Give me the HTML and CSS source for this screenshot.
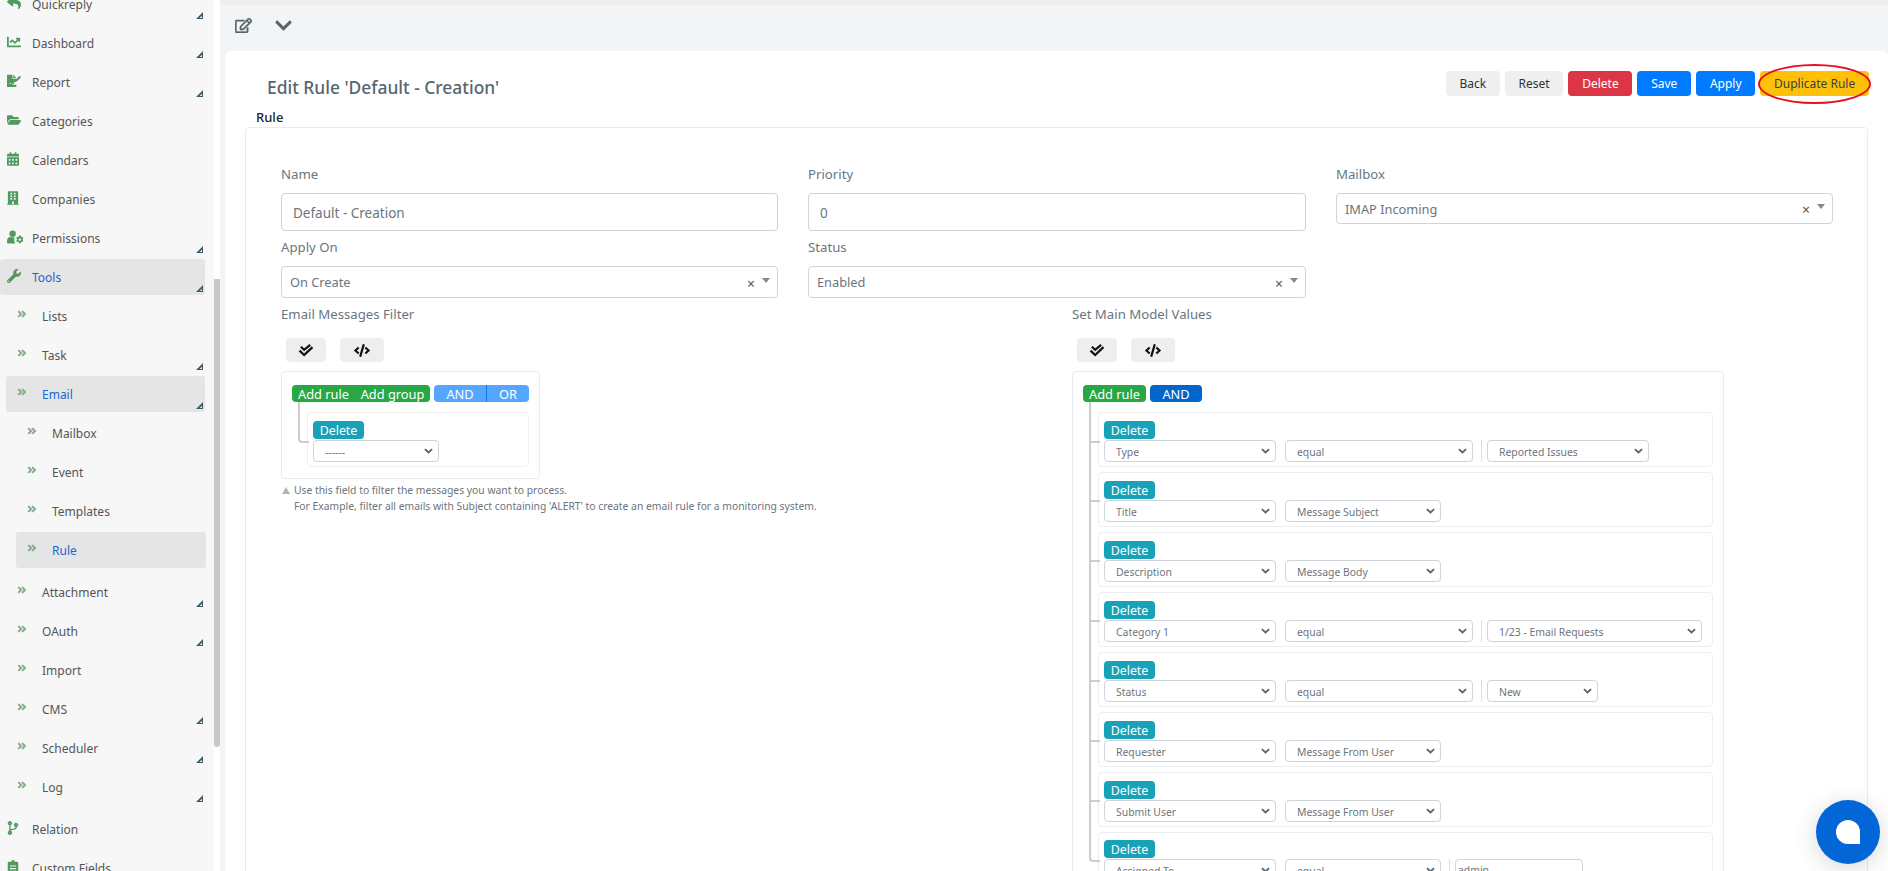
FILE: index.html
```html
<!DOCTYPE html>
<html lang="en">
<head>
<meta charset="utf-8">
<title>Edit Rule</title>
<link rel="stylesheet" href="styles.css">
</head>
<body>
<svg class="defs" aria-hidden="true">
  <symbol id="i-reply" viewBox="0 0 512 512"><path d="M8.309 189.836L184.313 37.851C199.719 24.546 224 35.347 224 56.015v80.053c160.629 1.839 288 34.032 288 186.258 0 61.441-39.581 122.309-83.333 154.132-13.653 9.931-33.111-2.533-28.077-18.631 45.344-145.012-21.507-183.51-176.59-185.742V360c0 20.7-24.3 31.453-39.687 18.164l-176.004-152c-11.071-9.562-11.086-26.753 0-36.328z"/></symbol>
  <symbol id="i-chart" viewBox="0 0 512 512"><path d="M496 384H64V80c0-8.84-7.16-16-16-16H16C7.16 64 0 71.16 0 80v336c0 17.67 14.33 32 32 32h464c8.84 0 16-7.16 16-16v-32c0-8.84-7.16-16-16-16zM464 96H345.94c-21.38 0-32.09 25.85-16.97 40.97l32.4 32.4L288 242.75l-73.37-73.37c-12.5-12.5-32.76-12.5-45.25 0l-68.69 68.69c-6.25 6.25-6.25 16.38 0 22.63l22.62 22.62c6.25 6.25 16.38 6.25 22.63 0L192 237.25l73.37 73.37c12.5 12.5 32.76 12.5 45.25 0l96-96 32.4 32.4c15.12 15.12 40.97 4.41 40.97-16.97V112c0-8.84-7.16-16-16-16z"/></symbol>
  <symbol id="i-report" viewBox="0 0 576 512"><path d="M0 24C0 11 11 0 24 0h200v136c0 13 11 24 24 24h136v60L300 304l-20 90-50-40-40 50-60-70-50 50h120c10 20 30 30 60 30l124-4v68c0 13-11 24-24 24H24c-13 0-24-11-24-24z"/><path d="M256 0l128 128H256zM560 80l-20-20c-12-12-30-12-42 0L340 220l-30 90 90-30L560 122c12-12 12-30 0-42z"/></symbol>
  <symbol id="i-folder" viewBox="0 0 576 512"><path d="M572.694 292.093L500.27 416.248A63.997 63.997 0 0 1 444.989 448H45.025c-18.523 0-30.064-20.093-20.731-36.093l72.424-124.155A64 64 0 0 1 152 256h399.964c18.523 0 30.064 20.093 20.73 36.093zM152 224h328v-48c0-26.51-21.49-48-48-48H272l-64-64H48C21.49 64 0 85.49 0 112v278.046l69.077-118.418C86.214 242.25 117.989 224 152 224z"/></symbol>
  <symbol id="i-calendar" viewBox="0 0 448 512"><path d="M0 464c0 26.5 21.5 48 48 48h352c26.5 0 48-21.5 48-48V192H0v272zm320-196c0-6.6 5.4-12 12-12h40c6.6 0 12 5.4 12 12v40c0 6.6-5.4 12-12 12h-40c-6.6 0-12-5.4-12-12v-40zm0 128c0-6.6 5.4-12 12-12h40c6.6 0 12 5.4 12 12v40c0 6.6-5.4 12-12 12h-40c-6.6 0-12-5.4-12-12v-40zM192 268c0-6.6 5.4-12 12-12h40c6.6 0 12 5.4 12 12v40c0 6.6-5.4 12-12 12h-40c-6.6 0-12-5.4-12-12v-40zm0 128c0-6.6 5.4-12 12-12h40c6.6 0 12 5.4 12 12v40c0 6.6-5.4 12-12 12h-40c-6.6 0-12-5.4-12-12v-40zM64 268c0-6.6 5.4-12 12-12h40c6.6 0 12 5.4 12 12v40c0 6.6-5.4 12-12 12H76c-6.6 0-12-5.4-12-12v-40zm0 128c0-6.6 5.4-12 12-12h40c6.6 0 12 5.4 12 12v40c0 6.6-5.4 12-12 12H76c-6.6 0-12-5.4-12-12v-40zM400 64h-48V16c0-8.8-7.2-16-16-16h-32c-8.8 0-16 7.2-16 16v48H160V16c0-8.8-7.2-16-16-16h-32c-8.8 0-16 7.2-16 16v48H48C21.5 64 0 85.5 0 112v48h448v-48c0-26.5-21.5-48-48-48z"/></symbol>
  <symbol id="i-building" viewBox="0 0 448 512"><path d="M436 480h-20V24c0-13.255-10.745-24-24-24H56C42.745 0 32 10.745 32 24v456H12c-6.627 0-12 5.373-12 12v20h448v-20c0-6.627-5.373-12-12-12zM128 76c0-6.627 5.373-12 12-12h40c6.627 0 12 5.373 12 12v40c0 6.627-5.373 12-12 12h-40c-6.627 0-12-5.373-12-12V76zm0 96c0-6.627 5.373-12 12-12h40c6.627 0 12 5.373 12 12v40c0 6.627-5.373 12-12 12h-40c-6.627 0-12-5.373-12-12v-40zm52 148h-40c-6.627 0-12-5.373-12-12v-40c0-6.627 5.373-12 12-12h40c6.627 0 12 5.373 12 12v40c0 6.627-5.373 12-12 12zm76 160h-64v-84c0-6.627 5.373-12 12-12h40c6.627 0 12 5.373 12 12v84zm64-172c0 6.627-5.373 12-12 12h-40c-6.627 0-12-5.373-12-12v-40c0-6.627 5.373-12 12-12h40c6.627 0 12 5.373 12 12v40zm0-96c0 6.627-5.373 12-12 12h-40c-6.627 0-12-5.373-12-12v-40c0-6.627 5.373-12 12-12h40c6.627 0 12 5.373 12 12v40zm0-96c0 6.627-5.373 12-12 12h-40c-6.627 0-12-5.373-12-12V76c0-6.627 5.373-12 12-12h40c6.627 0 12 5.373 12 12v40z"/></symbol>
  <symbol id="i-usercog" viewBox="0 0 640 512"><circle cx="224" cy="128" r="128"/><path d="M134 256h17c22 10 47 16 73 16s50-6 73-16h5c-14 30-18 60-14 96-10 50 10 100 50 160H48c-26 0-48-22-48-48v-42C0 311 60 256 134 256z"/><path fill-rule="evenodd" d="M476 200h80l8 46 34 18 42-16 22 62-36 30v24l36 30-22 62-42-16-34 18-8 46h-80l-8-46-34-18-42 16-22-62 36-30v-24l-36-30 22-62 42 16 34-18zM516 310a48 48 0 1 0 .1 0z"/></symbol>
  <symbol id="i-wrench" viewBox="0 0 512 512"><path d="M507.73 109.1c-2.24-9.03-13.54-12.09-20.12-5.51l-74.36 74.36-67.88-11.31-11.31-67.88 74.36-74.36c6.62-6.62 3.43-17.9-5.66-20.16-47.38-11.74-99.55.91-136.58 37.93-39.64 39.64-50.55 97.1-34.05 147.2L18.74 402.76c-24.99 24.99-24.99 65.51 0 90.5 24.99 24.99 65.51 24.99 90.5 0l213.21-213.21c50.12 16.71 107.47 5.68 147.37-34.22 37.07-37.07 49.7-89.32 37.91-136.73zM64 472c-13.25 0-24-10.75-24-24 0-13.26 10.75-24 24-24s24 10.74 24 24c0 13.25-10.75 24-24 24z"/></symbol>
  <symbol id="i-branch" viewBox="0 0 384 512"><path d="M384 144c0-44.2-35.8-80-80-80s-80 35.8-80 80c0 36.4 24.3 67.1 57.5 76.8-.6 16.1-4.2 28.5-11 36.9-15.4 19.2-49.3 22.4-85.2 25.7-28.2 2.6-57.4 5.4-81.3 16.9v-144c32.5-10.2 56-40.5 56-76.3 0-44.2-35.8-80-80-80S0 35.8 0 80c0 35.8 23.5 66.1 56 76.3v199.3C23.5 365.9 0 396.2 0 432c0 44.2 35.8 80 80 80s80-35.8 80-80c0-34-21.2-63.1-51.2-74.6 3.1-5.2 7.8-9.8 14.9-13.4 16.2-8.2 40.4-10.4 66.1-12.8 42.2-3.9 90-8.4 118.2-43.4 14-17.4 21.1-39.8 21.6-67.9 31.6-10.8 54.4-40.7 54.4-75.9zM80 64c8.8 0 16 7.2 16 16s-7.2 16-16 16-16-7.2-16-16 7.2-16 16-16zm0 384c-8.8 0-16-7.2-16-16s7.2-16 16-16 16 7.2 16 16-7.2 16-16 16zm224-320c8.8 0 16 7.2 16 16s-7.2 16-16 16-16-7.2-16-16 7.2-16 16-16z"/></symbol>
  <symbol id="i-clip" viewBox="0 0 384 512"><path fill-rule="evenodd" d="M336 64h-80a64 64 0 0 0-128 0H48C21.5 64 0 85.5 0 112v352c0 26.5 21.5 48 48 48h288c26.5 0 48-21.5 48-48V112c0-26.5-21.5-48-48-48zM80 200h224v40H80zm0 96h224v40H80zm0 96h224v40H80z"/></symbol>
  <symbol id="i-dbl" viewBox="0 0 448 400"><path transform="translate(0 -56)" d="M224.3 273l-136 136c-9.4 9.4-24.6 9.4-33.9 0l-22.6-22.6c-9.4-9.4-9.4-24.6 0-33.9l96.4-96.4-96.4-96.4c-9.4-9.4-9.4-24.6 0-33.9L54.3 103c9.4-9.4 24.6-9.4 33.9 0l136 136c9.5 9.4 9.5 24.6.1 34zm192-34l-136-136c-9.4-9.4-24.6-9.4-33.9 0l-22.6 22.6c-9.4 9.4-9.4 24.6 0 33.9l96.4 96.4-96.4 96.4c-9.4 9.4-9.4 24.6 0 33.9l22.6 22.6c9.4 9.4 24.6 9.4 33.9 0l136-136c9.4-9.2 9.4-24.4 0-33.8z"/></symbol>
  <symbol id="i-grip" viewBox="0 0 8 8"><path d="M8 0v8H0zM6.8 4.2L4.2 6.8h2.6z" fill-rule="evenodd"/></symbol>
  <symbol id="i-edit" viewBox="0 0 576 512"><path stroke="#56666f" stroke-width="14" d="M402.3 344.9l32-32c5-5 13.7-1.5 13.7 5.7V464c0 26.5-21.5 48-48 48H48c-26.5 0-48-21.5-48-48V112c0-26.5 21.5-48 48-48h273.5c7.1 0 10.7 8.6 5.7 13.7l-32 32c-1.5 1.5-3.5 2.3-5.7 2.3H48v352h352V350.5c0-2.1.8-4.1 2.3-5.6zm156.6-201.8L296.3 405.7l-90.4 10c-26.2 2.9-48.5-19.2-45.6-45.6l10-90.4L432.9 17.1c22.9-22.9 59.9-22.9 82.7 0l43.2 43.2c22.9 22.9 22.9 60 .1 82.8zM460.1 174L402 115.9 216.2 301.8l-7.3 65.3 65.3-7.3L460.1 174zm64.8-79.7l-43.2-43.2c-4.1-4.1-10.8-4.1-14.8 0L436 82l58.1 58.1 30.9-30.9c4-4.2 4-10.8-.1-14.9z"/></symbol>
  <symbol id="i-chev" viewBox="0 0 448 512"><path d="M207.029 381.476L12.686 187.132c-9.373-9.373-9.373-24.569 0-33.941l22.667-22.667c9.357-9.357 24.522-9.375 33.901-.04L224 284.505l154.745-154.021c9.379-9.335 24.544-9.317 33.901.04l22.667 22.667c9.373 9.373 9.373 24.569 0 33.941L240.971 381.476c-9.373 9.372-24.569 9.372-33.942 0z"/></symbol>
  <symbol id="i-check2" viewBox="0 0 16 14"><path d="M2.5 3l3.5 3.2L12.5 1M1 7.2l5 4.6 9-8.4" fill="none" stroke="currentColor" stroke-width="2.4"/></symbol>
  <symbol id="i-code" viewBox="0 0 640 512"><path d="M278.9 511.5l-61-17.7c-6.4-1.8-10-8.5-8.2-14.9L346.2 8.7c1.8-6.4 8.5-10 14.9-8.2l61 17.7c6.4 1.8 10 8.5 8.2 14.9L293.8 503.3c-1.9 6.4-8.5 10.1-14.9 8.2zm-114-112.2l43.5-46.4c4.6-4.9 4.3-12.7-.8-17.2L117 256l90.6-79.7c5.1-4.5 5.5-12.3.8-17.2l-43.5-46.4c-4.5-4.8-12.1-5.1-17-.5L3.8 247.2c-5.1 4.7-5.1 12.8 0 17.5l144.1 135.1c4.9 4.6 12.5 4.4 17-.5zm327.2.6l144.1-135.1c5.1-4.7 5.1-12.8 0-17.5L492.1 112.1c-4.8-4.5-12.4-4.3-17 .5L431.6 159c-4.6 4.9-4.3 12.7.8 17.2L523 256l-90.6 79.7c-5.1 4.5-5.5 12.3-.8 17.2l43.5 46.4c4.5 4.9 12.1 5.1 17 .6z"/></symbol>
</svg>

<div class="app">
  <aside class="sidebar">
    <nav class="nav">
      <ul class="menu">
        <li><a class="item"><svg class="ico"><use href="#i-reply"/></svg><span>Quickreply</span><svg class="grip"><use href="#i-grip"/></svg></a></li>
        <li><a class="item"><svg class="ico"><use href="#i-chart"/></svg><span>Dashboard</span><svg class="grip"><use href="#i-grip"/></svg></a></li>
        <li><a class="item"><svg class="ico"><use href="#i-report"/></svg><span>Report</span><svg class="grip"><use href="#i-grip"/></svg></a></li>
        <li><a class="item"><svg class="ico"><use href="#i-folder"/></svg><span>Categories</span></a></li>
        <li><a class="item"><svg class="ico narrow"><use href="#i-calendar"/></svg><span>Calendars</span></a></li>
        <li><a class="item"><svg class="ico narrow"><use href="#i-building"/></svg><span>Companies</span></a></li>
        <li><a class="item"><svg class="ico wide"><use href="#i-usercog"/></svg><span>Permissions</span><svg class="grip"><use href="#i-grip"/></svg></a></li>
        <li>
          <a class="item active"><svg class="ico"><use href="#i-wrench"/></svg><span>Tools</span><svg class="grip"><use href="#i-grip"/></svg></a>
          <ul class="menu sub">
            <li><a class="item"><svg class="ico dbl"><use href="#i-dbl"/></svg><span>Lists</span></a></li>
            <li><a class="item"><svg class="ico dbl"><use href="#i-dbl"/></svg><span>Task</span><svg class="grip"><use href="#i-grip"/></svg></a></li>
            <li>
              <a class="item active"><svg class="ico dbl"><use href="#i-dbl"/></svg><span>Email</span><svg class="grip"><use href="#i-grip"/></svg></a>
              <ul class="menu sub subsub">
                <li><a class="item"><svg class="ico dbl"><use href="#i-dbl"/></svg><span>Mailbox</span></a></li>
                <li><a class="item"><svg class="ico dbl"><use href="#i-dbl"/></svg><span>Event</span></a></li>
                <li><a class="item"><svg class="ico dbl"><use href="#i-dbl"/></svg><span>Templates</span></a></li>
                <li><a class="item active"><svg class="ico dbl"><use href="#i-dbl"/></svg><span>Rule</span></a></li>
              </ul>
            </li>
            <li><a class="item"><svg class="ico dbl"><use href="#i-dbl"/></svg><span>Attachment</span><svg class="grip"><use href="#i-grip"/></svg></a></li>
            <li><a class="item"><svg class="ico dbl"><use href="#i-dbl"/></svg><span>OAuth</span><svg class="grip"><use href="#i-grip"/></svg></a></li>
            <li><a class="item"><svg class="ico dbl"><use href="#i-dbl"/></svg><span>Import</span></a></li>
            <li><a class="item"><svg class="ico dbl"><use href="#i-dbl"/></svg><span>CMS</span><svg class="grip"><use href="#i-grip"/></svg></a></li>
            <li><a class="item"><svg class="ico dbl"><use href="#i-dbl"/></svg><span>Scheduler</span><svg class="grip"><use href="#i-grip"/></svg></a></li>
            <li><a class="item"><svg class="ico dbl"><use href="#i-dbl"/></svg><span>Log</span><svg class="grip"><use href="#i-grip"/></svg></a></li>
          </ul>
        </li>
        <li><a class="item"><svg class="ico narrow"><use href="#i-branch"/></svg><span>Relation</span></a></li>
        <li><a class="item"><svg class="ico narrow"><use href="#i-clip"/></svg><span>Custom Fields</span></a></li>
      </ul>
    </nav>
    <div class="scrollbar"><div class="thumb"></div></div>
  </aside>

  <main class="main">
    <div class="toolbar">
      <svg class="tool tool-edit"><use href="#i-edit"/></svg>
      <svg class="tool tool-chev"><use href="#i-chev"/></svg>
    </div>
    <section class="card">
      <header class="card-head">
        <h1 class="title">Edit Rule 'Default - Creation'</h1>
        <div class="actions">
          <button class="btn light">Back</button>
          <button class="btn light">Reset</button>
          <button class="btn danger">Delete</button>
          <button class="btn primary">Save</button>
          <button class="btn primary">Apply</button>
          <button class="btn warning">Duplicate Rule</button>
        </div>
      </header>
      <div class="legend">Rule</div>
      <div class="panel">
        <div class="grid3">
          <div class="field">
            <label class="lbl">Name</label>
            <input class="input" value="Default - Creation">
          </div>
          <div class="field">
            <label class="lbl">Priority</label>
            <input class="input" value="0">
          </div>
          <div class="field">
            <label class="lbl">Mailbox</label>
            <div class="sel2"><span class="sel2-val">IMAP Incoming</span><span class="sel2-x">×</span><span class="sel2-arrow"></span></div>
          </div>
          <div class="field">
            <label class="lbl">Apply On</label>
            <div class="sel2 tall"><span class="sel2-val">On Create</span><span class="sel2-x">×</span><span class="sel2-arrow"></span></div>
          </div>
          <div class="field">
            <label class="lbl">Status</label>
            <div class="sel2 tall"><span class="sel2-val">Enabled</span><span class="sel2-x">×</span><span class="sel2-arrow"></span></div>
          </div>
        </div>
        <div class="grid2">
          <div class="col">
            <label class="lbl">Email Messages Filter</label>
            <div class="qb-tools">
              <button class="qb-tool t-check"><svg class="t-ico"><use href="#i-check2"/></svg></button>
              <button class="qb-tool t-code"><svg class="t-ico"><use href="#i-code"/></svg></button>
            </div>
            <div class="builder small">
              <div class="group-head">
                <div class="btn-group green"><button class="qb-btn add">Add rule</button><button class="qb-btn add second">Add group</button></div>
                <div class="btn-group"><button class="qb-btn cond sky">AND</button><button class="qb-btn cond sky div">OR</button></div>
              </div>
              <ul class="rules">
                <li class="rule">
                  <button class="del">Delete</button>
                  <div class="rule-row"><select class="s w126"><option>------</option></select></div>
                </li>
              </ul>
            </div>
            <p class="hint"><span class="tri"></span>Use this field to filter the messages you want to process.<br>For Example, filter all emails with Subject containing 'ALERT' to create an email rule for a monitoring system.</p>
          </div>
          <div class="col col-right">
            <label class="lbl">Set Main Model Values</label>
            <div class="qb-tools">
              <button class="qb-tool t-check"><svg class="t-ico"><use href="#i-check2"/></svg></button>
              <button class="qb-tool t-code"><svg class="t-ico"><use href="#i-code"/></svg></button>
            </div>
            <div class="builder">
              <div class="group-head">
                <div class="btn-group green"><button class="qb-btn add">Add rule</button></div>
                <div class="btn-group"><button class="qb-btn cond navy">AND</button></div>
              </div>
              <ul class="rules">
                <li class="rule"><button class="del">Delete</button>
                  <div class="rule-row"><select class="s w172"><option>Type</option></select><select class="s w188"><option>equal</option></select><div class="val"><select class="s w162"><option>Reported Issues</option></select></div></div></li>
                <li class="rule"><button class="del">Delete</button>
                  <div class="rule-row"><select class="s w172"><option>Title</option></select><select class="s w156"><option>Message Subject</option></select></div></li>
                <li class="rule"><button class="del">Delete</button>
                  <div class="rule-row"><select class="s w172"><option>Description</option></select><select class="s w156"><option>Message Body</option></select></div></li>
                <li class="rule"><button class="del">Delete</button>
                  <div class="rule-row"><select class="s w172"><option>Category 1</option></select><select class="s w188"><option>equal</option></select><div class="val"><select class="s w215"><option>1/23 - Email Requests</option></select></div></div></li>
                <li class="rule"><button class="del">Delete</button>
                  <div class="rule-row"><select class="s w172"><option>Status</option></select><select class="s w188"><option>equal</option></select><div class="val"><select class="s w111"><option>New</option></select></div></div></li>
                <li class="rule"><button class="del">Delete</button>
                  <div class="rule-row"><select class="s w172"><option>Requester</option></select><select class="s w156"><option>Message From User</option></select></div></li>
                <li class="rule"><button class="del">Delete</button>
                  <div class="rule-row"><select class="s w172"><option>Submit User</option></select><select class="s w156"><option>Message From User</option></select></div></li>
                <li class="rule last-up"><button class="del">Delete</button>
                  <div class="rule-row"><select class="s w172"><option>Assigned To</option></select><select class="s w156"><option>equal</option></select><div class="val"><input class="s-input" value="admin"></div></div></li>
              </ul>
            </div>
          </div>
        </div>
      </div>
    </section>
  </main>
</div>

<button class="chat" aria-label="Chat"><span class="chat-bubble"></span></button>
</body>
</html>
```

FILE: styles.css
```css
* { box-sizing: border-box; }
html, body { margin: 0; padding: 0; height: 100%; overflow: hidden; }
body { font-family: "Noto Sans", "Open Sans", sans-serif; font-size: 14px; color: #5f6b73; background: #f3f4f6; }
.defs { position: absolute; width: 0; height: 0; }
button { font-family: inherit; }
ul { list-style: none; margin: 0; padding: 0; }

.app { display: flex; height: 871px; overflow: hidden; }

/* Sidebar */
.sidebar { width: 220px; flex: none; display: flex; height: 871px; overflow: hidden; }
.nav { width: 214px; background: #f7f7f7; overflow: hidden; }
.nav > .menu { margin-top: -14px; }
.scrollbar { width: 6px; background: #fff; position: relative; }
.thumb { position: absolute; left: 0; top: 279px; width: 6px; height: 468px; background: #c9c9c9; border-radius: 0 0 3px 3px; }

.item { position: relative; display: flex; align-items: center; height: 36px; width: 205px; margin-bottom: 3px; border-radius: 3px; color: #555; font-size: 12px; padding-left: 7px; }
.item span { margin-left: 11px; padding-top: 1px; }
.item.active { background: #e5e5e5; }
.item.active span { color: #1a66d2; }
.ico { width: 14px; height: 14px; flex: none; fill: #4f9a5d; margin-top: -3px; }
.ico.narrow { width: 12px; margin-right: 2px; }
.ico.wide { width: 16px; margin-right: -2px; }
.ico.dbl { width: 10px; height: 8px; fill: #80ab82; stroke: #80ab82; stroke-width: 24px; margin-top: -4px; }
.grip { position: absolute; right: 2px; bottom: 3px; width: 7px; height: 7px; fill: #3f5a66; }
.sub { padding-left: 6px; padding-bottom: 3px; }
.sub > li > .item { width: 199px; padding-left: 11px; }
.sub > li > .item span { margin-left: 15px; }
.subsub { padding-left: 10px; }
.subsub > li > .item { width: 190px; }

/* Main */
.main { flex: 1; min-width: 0; border-top: 5px solid #eeeeee; padding-left: 5px; }
.toolbar { height: 46px; display: flex; align-items: center; padding: 0 0 6px 10px; }
.tool { fill: #56666f; flex: none; }
.tool-edit { width: 17px; height: 15px; }
.tool-chev { width: 17px; height: 19px; margin-left: 23px; }

.card { background: #fff; border-radius: 6px 6px 0 0; padding-top: 20px; height: 900px; }
.card-head { display: flex; justify-content: space-between; padding: 0 19px 0 42px; height: 37px; }
.title { margin: 4px 0 0; font-size: 17.4px; line-height: 24px; font-weight: 500; color: #56666f; }
.actions { display: flex; gap: 5px; align-items: flex-start; }
.btn { height: 25px; border: 0; border-radius: 4px; padding: 0 13.75px; font-size: 12px; line-height: 25px; white-space: nowrap; }
.btn.light { background: #efefef; color: #333; }
.btn.danger { background: #dc3545; color: #fff; }
.btn.primary { background: #007bff; color: #fff; }
.btn.warning { background: #ffc107; color: #3a3f45; position: relative; }
.btn.warning::after { content: ""; position: absolute; left: -2px; right: -2px; top: -7px; bottom: -8px; border: 2px solid #e8101c; border-radius: 50%; }
.legend { margin-left: 31px; font-size: 13px; line-height: 19px; color: #212529; font-weight: 500; }
.panel { margin: 0 20px; border: 1px solid #e9ecef; border-radius: 4px; padding: 35px 34px 0 35px; height: 900px; }

.grid3 { display: grid; grid-template-columns: 497px 498px 1fr; column-gap: 30px; row-gap: 5px; align-items: start; }
.lbl { display: block; font-size: 13.2px; line-height: 21px; color: #687680; }
.field .lbl { height: 21px; margin-bottom: 9px; padding-top: 1px; }
.input { display: block; width: 100%; height: 38px; border: 1px solid #ced4da; border-radius: 4px; padding: 2px 11px 0; font: 13.5px "Noto Sans", sans-serif; color: #6c757d; background: #fff; outline: none; }
.sel2 { display: flex; align-items: center; height: 31px; border: 1px solid #ced4da; border-radius: 4px; padding: 0 7px 0 8px; font-size: 12.8px; color: #6c757d; }
.sel2.tall { height: 32px; }
.sel2-val { flex: 1; }
.sel2-x { font-size: 14px; margin-top: 2px; margin-right: 7px; color: #555; }
.sel2-arrow { width: 0; height: 0; border-left: 4px solid transparent; border-right: 4px solid transparent; border-top: 5px solid #888; margin-top: -4px; }

.grid2 { display: grid; grid-template-columns: 761px 1fr; column-gap: 30px; margin-top: 6px; }
.col .lbl { height: 21px; }
.qb-tools { display: flex; gap: 14px; margin: 13px 0 9px 5px; }
.qb-tool { display: flex; align-items: center; justify-content: center; height: 24px; border: 0; border-radius: 4px; background: #eee; padding: 0; color: #111; }
.t-check { width: 40px; }
.t-code { width: 44px; }
.t-ico { width: 16px; height: 13px; fill: #111; }

.builder { width: 652px; border: 1px solid #e9ecef; border-radius: 4px; padding: 13px 10px 11px 10px; }
.builder.small { width: 259px; }
.group-head { display: flex; gap: 4px; height: 17px; }
.btn-group { display: flex; height: 17px; border-radius: 4px; overflow: hidden; }
.btn-group.green { background: #28a745; }
.qb-btn { border: 0; height: 17px; padding: 2px 0 0; color: #fff; font-size: 12.8px; line-height: 15px; background: transparent; white-space: nowrap; }
.qb-btn.add { width: 63px; }
.qb-btn.add.second { width: 75px; }
.qb-btn.sky { background: #55a6ff; width: 52px; }
.qb-btn.sky.div { width: 43px; border-left: 1px solid #0d78f2; }
.qb-btn.navy { background: #0066cc; width: 52px; }

.rules { margin: 10px 0 0 15px; display: flex; flex-direction: column; gap: 5px; }
.rule { position: relative; border: 1px solid #eceef0; border-radius: 4px; padding: 8px 5px 4px; height: 55px; }
.rule::before { content: ""; position: absolute; left: -10px; top: -11px; height: 39px; width: 9px; border-left: 2px solid #ccc; border-bottom: 2px solid #ccc; }
.rule + .rule::before { top: -6px; height: 33px; }
.rule:last-child::before { border-bottom-left-radius: 4px; }
.rule::after { content: ""; position: absolute; left: -10px; top: 27px; bottom: -6px; border-left: 2px solid #ccc; }
.rule:last-child::after { display: none; }
.del { display: block; width: 51px; height: 18px; padding: 2px 0 0; border: 0; border-radius: 4px; background: #17a2b8; color: #fff; font-size: 12.4px; line-height: 16px; }
.rule-row { display: flex; gap: 9px; margin-top: 1px; }
.rule.last-up { padding-top: 7px; }
.s { appearance: none; -webkit-appearance: none; height: 22px; border: 1px solid #ced4da; border-radius: 4px; background: #fff url("data:image/svg+xml,%3Csvg xmlns='http://www.w3.org/2000/svg' viewBox='0 0 10 6'%3E%3Cpath d='M1 1l4 3.6L9 1' fill='none' stroke='%2356666f' stroke-width='2'/%3E%3C/svg%3E") no-repeat right 5px center / 9px 6px; padding: 2px 14px 0 11px; font: 10.4px "Noto Sans", sans-serif; color: #6c757d; outline: none; flex: none; }
.w126 { width: 126px; }
.w172 { width: 172px; }
.w188 { width: 188px; }
.w156 { width: 156px; }
.w162 { width: 162px; }
.w215 { width: 215px; }
.w111 { width: 111px; }
.val { display: flex; margin-left: -1px; padding-left: 5px; border-left: 1px solid #ddd; }
.s-input { width: 128px; height: 22px; border: 1px solid #ced4da; border-radius: 4px; padding: 0 2px; font: 10.4px "Noto Sans", sans-serif; color: #6c757d; outline: none; }
.hint { margin: 3px 0 0; font-size: 10.33px; line-height: 16px; color: #6c757d; padding-left: 13px; position: relative; }
.tri { position: absolute; left: 1px; top: 5px; width: 0; height: 0; border-left: 4px solid transparent; border-right: 4px solid transparent; border-bottom: 7px solid #a7b6c0; }

/* Chat */
.chat { position: fixed; left: 1816px; top: 800px; width: 64px; height: 64px; border: 0; border-radius: 50%; background: #0366d6; box-shadow: 0 4px 24px rgba(0,0,0,.16); display: flex; align-items: center; justify-content: center; padding: 0; }
.chat-bubble { width: 24px; height: 24px; background: #fff; border-radius: 50% 50% 0 50%; }
```
